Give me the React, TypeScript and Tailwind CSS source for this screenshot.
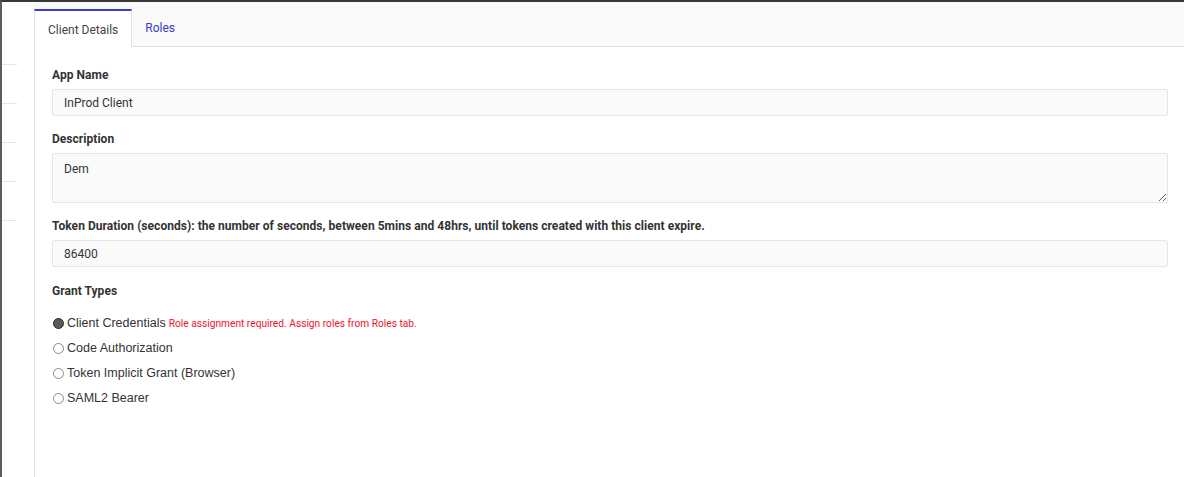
import { useState } from "react";

const GRANTS = [
  "Client Credentials",
  "Code Authorization",
  "Token Implicit Grant (Browser)",
  "SAML2 Bearer",
];

function Label({ children }: { children: React.ReactNode }) {
  return <div className="text-[12px] leading-4 font-bold tracking-[0.04px] text-[#333]">{children}</div>;
}

export default function App() {
  const [grant, setGrant] = useState(0);

  return (
    <div className="flex h-[477px] w-full overflow-hidden border-t-2 border-l-2 border-t-[#383838] border-l-[#5c5c5c] bg-white font-['Roboto',sans-serif]">
      {/* left rail */}
      <div className="flex w-[32px] shrink-0 flex-col gap-[38px] pt-[62px]">
        {[0, 1, 2, 3, 4].map((i) => (
          <div key={i} className="h-px w-[15px] bg-[#e6e6e6]" />
        ))}
      </div>

      <div className="flex min-w-0 flex-1 flex-col">
        {/* tabs */}
        <div className="flex h-[45px] shrink-0 items-end border-b border-[#e2e2e2] bg-[#fafafa]">
          <div className="-mb-px flex h-[38px] items-center border-x border-t-2 border-x-[#e2e2e2] border-t-[#3b3bcf] bg-white px-[13px] pt-px text-[12px] text-[#444]">
            Client Details
          </div>
          <div className="flex h-[37px] items-center px-[13px] pt-px text-[12px] text-[#3b3bc8]">Roles</div>
        </div>

        {/* form */}
        <div className="flex-1 border-l border-[#e2e2e2] pl-[17px] pr-[16px] pt-[20px]">
          <Label>App Name</Label>
          <input
            readOnly
            value="InProd Client"
            className="mt-[6px] block h-[27px] w-full rounded-[2px] border border-[#e6e6e6] bg-[#fafafa] px-[11px] text-[12px] text-[#333] outline-none"
          />

          <div className="mt-[15px]">
            <Label>Description</Label>
          </div>
          <textarea
            readOnly
            value="Dem"
            className="mt-[6px] block h-[50px] w-full rounded-[2px] border border-[#e6e6e6] bg-[#fafafa] px-[11px] py-[7px] text-[12px] leading-4 text-[#333] outline-none"
          />

          <div className="mt-[15px]">
            <Label>
              Token Duration (seconds): the number of seconds, between 5mins and 48hrs, until tokens created with this client expire.
            </Label>
          </div>
          <input
            readOnly
            value="86400"
            className="mt-[6px] block h-[27px] w-full rounded-[2px] border border-[#e6e6e6] bg-[#fafafa] px-[11px] text-[12px] text-[#333] outline-none"
          />

          <div className="mt-[16px]">
            <Label>Grant Types</Label>
          </div>

          <div className="mt-[12px] flex flex-col">
            {GRANTS.map((g, i) => (
              <label
                key={g}
                onClick={() => setGrant(i)}
                className="flex h-[25px] cursor-pointer items-center font-['Liberation_Sans',Arial,sans-serif] text-[12.5px] text-[#333]"
              >
                <span
                  className={
                    grant === i
                      ? "mr-[3px] ml-px h-[11px] w-[11px] shrink-0 rounded-full border border-[#2a2a2a] bg-[#5a5a5a]"
                      : "mr-[3px] ml-px h-[11px] w-[11px] shrink-0 rounded-full border border-[#8a8a8a] bg-white"
                  }
                />
                {g}
                {i === 0 && (
                  <span className="ml-[3px] font-['Roboto',sans-serif] text-[10.2px] text-[#f5102a]">
                    Role assignment required. Assign roles from Roles tab.
                  </span>
                )}
              </label>
            ))}
          </div>
        </div>
      </div>
    </div>
  );
}
